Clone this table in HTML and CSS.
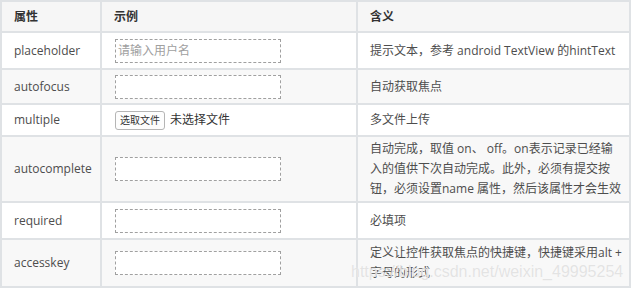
FILE: index.html
```html
<!DOCTYPE html>
<html lang="zh">
<head>
    <meta charset="UTF-8">
    <meta name="viewport" content="width=device-width, initial-scale=1.0">
    <title>input 属性</title>
    <link rel="stylesheet" href="styles.css">
</head>
<body>
    <div class="wrap">
        <table class="attr-table">
            <thead>
                <tr>
                    <th class="col-name">属性</th>
                    <th class="col-demo">示例</th>
                    <th class="col-desc">含义</th>
                </tr>
            </thead>
            <tbody>
                <tr class="row-a">
                    <td>placeholder</td>
                    <td><input type="text" class="demo-input" placeholder="请输入用户名"></td>
                    <td>提示文本，参考 android TextView 的hintText</td>
                </tr>
                <tr class="row-b">
                    <td>autofocus</td>
                    <td><input type="text" class="demo-input"></td>
                    <td>自动获取焦点</td>
                </tr>
                <tr class="row-c">
                    <td>multiple</td>
                    <td><span class="file-btn">选取文件</span><span class="file-none">未选择文件</span></td>
                    <td>多文件上传</td>
                </tr>
                <tr class="row-d">
                    <td>autocomplete</td>
                    <td><input type="text" class="demo-input"></td>
                    <td class="desc-long">自动完成，取值 on、 off。on表示记录已经输入的值供下次自动完成。此外，必须有提交按钮，必须设置name 属性，然后该属性才会生效</td>
                </tr>
                <tr class="row-e">
                    <td>required</td>
                    <td><input type="text" class="demo-input"></td>
                    <td>必填项</td>
                </tr>
                <tr class="row-f">
                    <td>accesskey</td>
                    <td><input type="text" class="demo-input"></td>
                    <td>定义让控件获取焦点的快捷键，快捷键采用alt + 字母的形式</td>
                </tr>
            </tbody>
        </table>
        <!-- 水印 -->
        <div class="watermark">https://blog.csdn.net/weixin_49995254</div>
    </div>
</body>
</html>
```

FILE: styles.css
```css
body {
    margin: 0;
    padding: 0;
    background-color: #fff;
    font-family: "Open Sans", "Noto Sans CJK SC", sans-serif;
    font-size: 12px;
    color: #4d4d4d;
}
.wrap {
    position: relative;
    width: 631px;
}
.attr-table {
    width: 631px;
    border-collapse: collapse;
    table-layout: fixed;
}
.attr-table th,
.attr-table td {
    border: 2px solid #dfe2e5;
    padding: 2px 1px 2px 12px;
    text-align: left;
    vertical-align: middle;
    line-height: 20px;
}
.attr-table th {
    background-color: #f6f6f6;
    color: #333;
    font-weight: bold;
    height: 25px;
}
.col-name {
    width: 85px;
}
.col-demo {
    width: 241px;
}
.attr-table tbody tr:nth-child(2n) {
    background-color: #f8f8f8;
}
.attr-table td.desc-long {
    padding-right: 8px;
}
.row-a td { height: 31px; }
.row-b td { height: 29px; }
.row-c td { height: 26px; }
.row-d td { height: 60px; }
.row-e td { height: 31px; }
.row-f td { height: 42px; }
.demo-input {
    box-sizing: border-box;
    width: 166px;
    height: 24px;
    margin: 0 0 0 1px;
    padding: 0 2px;
    border: 1px dashed #a0a0a0;
    background: #fff;
    font-family: "Open Sans", "Noto Sans CJK SC", sans-serif;
    font-size: 12px;
    vertical-align: middle;
}
.demo-input::placeholder {
    color: #a0a0a0;
}
.file-btn {
    display: inline-block;
    margin-left: 1px;
    padding: 0 4px;
    height: 17px;
    line-height: 17px;
    border: 1px solid #b5b5b5;
    border-radius: 3px;
    background: #fdfdfd;
    font-size: 10px;
    color: #333;
    vertical-align: middle;
}
.file-none {
    margin-left: 5px;
    color: #333;
    vertical-align: middle;
}
.watermark {
    position: absolute;
    left: 351px;
    top: 263px;
    font-family: "Liberation Sans", Arial, sans-serif;
    font-size: 16px;
    color: rgba(215, 215, 215, 0.7);
    text-shadow: 0 0 1px #fff;
    pointer-events: none;
}
```
